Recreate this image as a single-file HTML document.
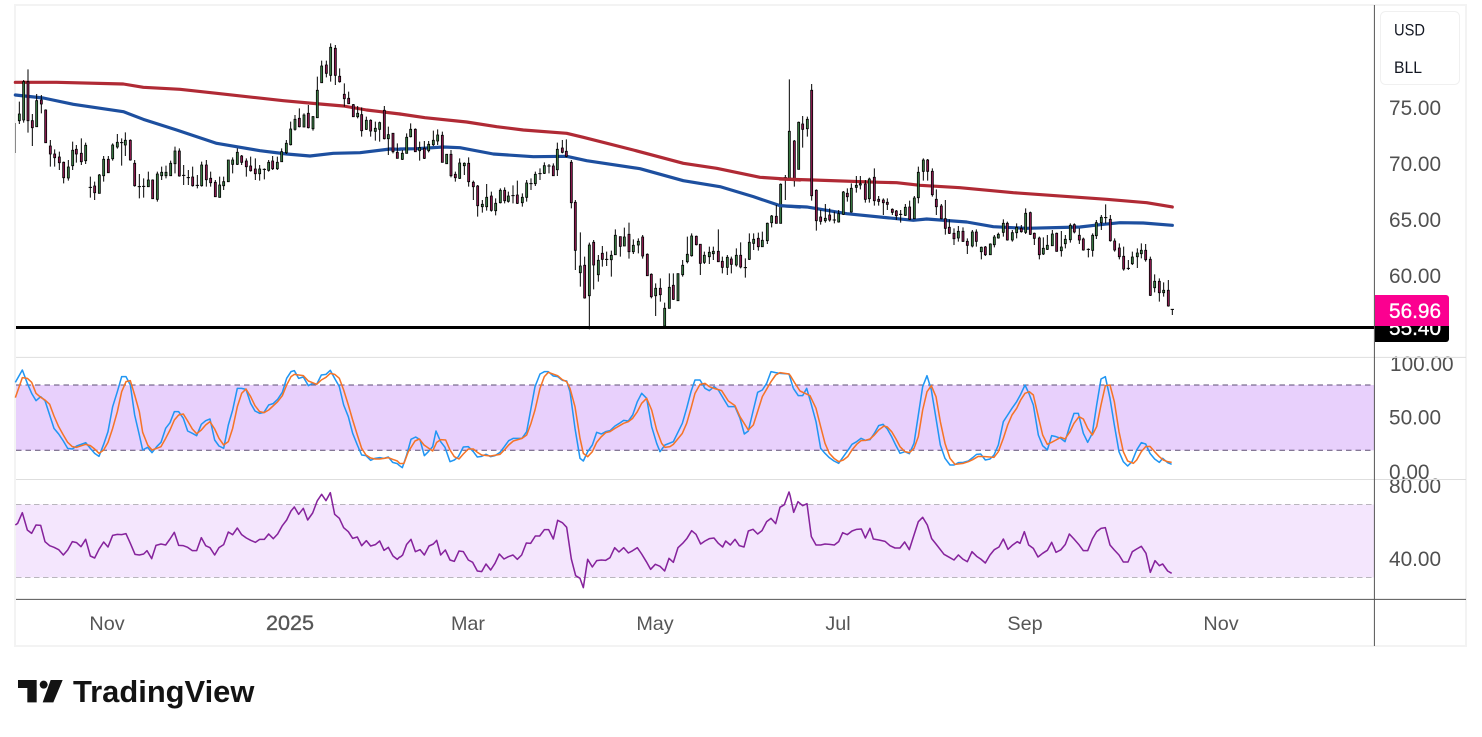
<!DOCTYPE html>
<html><head><meta charset="utf-8"><title>BLL chart</title>
<style>html,body{margin:0;padding:0;background:#fff;width:1482px;height:737px;overflow:hidden}svg{display:block;filter:blur(.3px)}
text{font-family:"Liberation Sans",sans-serif}
.ax{font-size:20.8px;fill:#505050}
.mo{font-size:19.8px;fill:#565656;text-anchor:middle}
.w{fill:none;stroke:#000;stroke-width:3}
.g{fill:#3a7d44;stroke:#000;stroke-width:2.4}
.r{fill:#8e1a50;stroke:#000;stroke-width:2.4}
.ma1{fill:none;stroke:#b02a35;stroke-width:9.5;stroke-linejoin:round;stroke-linecap:round}
.ma2{fill:none;stroke:#1d4f9f;stroke-width:9.5;stroke-linejoin:round;stroke-linecap:round}
.b{fill:none;stroke:#2196f3;stroke-width:4.6;stroke-linejoin:round}
.o{fill:none;stroke:#f57427;stroke-width:4.6;stroke-linejoin:round}
.p{fill:none;stroke:#86239c;stroke-width:4.6;stroke-linejoin:round}
</style></head><body>
<svg width="1482" height="737" viewBox="0 0 1482 737" xmlns="http://www.w3.org/2000/svg">
<rect width="1482" height="737" fill="#fff"/>
<rect x="15" y="5" width="1451" height="641" fill="#fff" stroke="#f3f3f3" stroke-width="2"/>

<!-- bands -->
<rect x="16" y="385" width="1358" height="65.3" fill="#e8d0fc"/>
<rect x="16" y="504.5" width="1358" height="73" fill="#f4e6fd"/>
<path d="M16 385H1374M16 450.3H1374" stroke="#5d4c74" stroke-width="1" stroke-dasharray="5.5 4" fill="none"/>
<path d="M16 504.5H1374M16 577.5H1374" stroke="#b9b6bd" stroke-width="1" stroke-dasharray="5.5 3.5" fill="none"/>

<!-- stray clipped wick -->
<path d="M15.5 123V153" stroke="#8a8a8a" stroke-width="1"/>

<!-- candles + MAs: section 1 -->
<g transform="translate(0,30) scale(.33333)">
<path class="ma1" d="M46 157 170 157 370 162 430 172 540 178 650 190 850 212 960 222 1030 228 1100 240 1200 252"/>
<path class="ma2" d="M46 195 130 204 220 223 370 245 430 268 530 300 650 340 780 362 860 372 930 378 1000 370 1080 368 1170 357 1200 358"/>
<path class="w" d="M58 215V282M71 150V278M84 118V308M97 252V348M110 192V290M124 195V250M137 238V338M151 330V410M164 358V410M178 365V420M191 395V460M205 390V452M218 335V420M229 345V398M244 325V405M257 338V402M271 440V503M266 472h10M284 455V510M298 432V490M311 378V455M325 378V428M338 340V392M352 312V356M365 325V407M360 338h10M376 307V378M391 328V392M404 390V470M418 432V505M413 470h10M431 445V503M426 469h10M445 425V470M458 448V506M472 425V515M485 410V450M498 407V445M512 392V437M525 350V430M538 355V440M551 405V465M546 436h10M565 420V465M560 443h10M578 410V470M592 435V475M587 466h10M605 395V470M619 390V470M632 425V470M646 450V500M659 440V503M671 440V480M685 390V455M698 382V430M712 355V405M725 375V405M739 385V440M752 380V425M766 385V450M779 405V452M793 415V448M788 418h10M806 390V425M818 378V420M832 380V420M845 355V395M859 330V372M872 275V346M885 255V302M898 235V292M912 250V292M925 225V295M939 258V302M952 140V263M965 92V158M979 92V142M992 40V155M1006 45V165M1019 115V158M1033 160V230M1046 185V221M1060 222V260M1073 228V265M1085 232V320M1099 260V300M1112 268V320M1126 275V332M1139 275V335M1153 228V328M1165 290V375M1179 310V370M1192 340V385"/>
<path class="g" d="M55 252h6v20h-6zM68 155h6v115h-6zM107 212h6v78h-6zM202 411h6v33h-6zM215 361h6v46h-6zM254 346h6v46h-6zM295 435h6v55h-6zM308 388h6v49h-6zM335 345h6v41h-6zM349 337h6v14h-6zM373 331h6v14h-6zM442 450h6v20h-6zM469 432h6v76h-6zM482 427h6v10h-6zM495 427h6v10h-6zM509 400h6v37h-6zM522 363h6v38h-6zM602 405h6v62h-6zM656 465h6v37h-6zM668 455h6v12h-6zM682 390h6v65h-6zM695 390h6v13h-6zM709 367h6v36h-6zM776 417h6v14h-6zM803 397h6v24h-6zM829 397h6v19h-6zM842 365h6v30h-6zM856 340h6v28h-6zM869 297h6v47h-6zM882 268h6v30h-6zM909 255h6v36h-6zM936 260h6v36h-6zM949 181h6v82h-6zM962 108h6v50h-6zM989 52h6v84h-6zM1070 250h6v10h-6zM1096 271h6v27h-6zM1123 295h6v9h-6zM1136 278h6v20h-6zM1162 314h6v12h-6z"/>
<path class="r" d="M81 155h6v117h-6zM94 272h6v21h-6zM121 210h6v12h-6zM134 240h6v98h-6zM148 348h6v24h-6zM161 372h6v11h-6zM175 381h6v17h-6zM188 397h6v46h-6zM226 358h6v14h-6zM241 370h6v25h-6zM281 468h6v20h-6zM322 388h6v40h-6zM388 331h6v59h-6zM401 400h6v67h-6zM455 450h6v56h-6zM535 363h6v75h-6zM575 441h6v26h-6zM616 405h6v44h-6zM629 445h6v13h-6zM643 457h6v43h-6zM722 378h6v19h-6zM736 393h6v17h-6zM749 408h6v14h-6zM763 417h6v14h-6zM815 393h6v23h-6zM895 265h6v25h-6zM922 250h6v43h-6zM976 105h6v25h-6zM1003 55h6v81h-6zM1016 139h6v16h-6zM1030 193h6v13h-6zM1043 205h6v16h-6zM1057 224h6v36h-6zM1082 254h6v48h-6zM1109 271h6v32h-6zM1150 241h6v85h-6zM1176 310h6v55h-6zM1189 367h6v18h-6z"/>
</g>

<!-- section 2 -->
<g transform="translate(400,60) scale(.33333)">
<path class="ma1" d="M0 162 75 173 200 186 290 200 370 210 500 220 550 232 700 270 850 310 950 325 1080 352 1200 360"/>
<path class="ma2" d="M0 267 50 266 130 261 180 263 280 282 400 290 500 289 560 302 720 326 850 362 960 380 1060 410 1140 437 1200 441"/>
<path class="w" d="M7 270V300M20 220V280M32 190V232M46 205V275M59 245V302M73 243V297M86 243V277M100 212V258M113 208V255M127 215V307M140 283V311M153 270V352M166 335V365M179 295V357M193 307V345M206 292V380M220 362V420M233 375V470M247 420V458M260 372V452M274 395V455M287 415V466M301 385V430M314 382V430M325 395V428M339 376V430M334 407h10M352 362V432M367 400V440M380 360V425M393 355V390M388 371h10M406 335V378M420 325V360M415 341h10M433 307V342M447 312V340M442 318h10M460 310V348M472 248V348M487 240V280M499 238V292M514 300V445M526 420V630M541 517V680M554 590V716M568 548V808M581 540V688M595 585V665M607 558V620M620 575V618M615 598h10M634 572V650M646 508V585M661 530V590M673 503V558M687 488V596M700 538V582M715 535V580M728 525V596M742 580V647M754 640V715M767 670V768M781 655V725M794 728V798M808 640V745M820 640V720M834 640V722M848 600V650M862 530V610M875 520V590M889 527V556M901 553V645M913 575V612M928 560V612M940 560V600M955 508V605M967 590V640M982 585V645M994 590V640M1009 565V620M1022 547V625M1036 595V653M1031 623h10M1048 520V600M1061 520V570M1075 518V572M1087 515V560M1102 488V552M1115 465V502M1129 435V490M1142 370V490M1156 345V420M1151 353h10M1168 58V358M1183 240V380M1196 185V328"/>
<path class="g" d="M4 280h6v18h-6zM17 232h6v48h-6zM29 208h6v22h-6zM56 263h6v9h-6zM83 253h6v19h-6zM97 241h6v13h-6zM110 225h6v18h-6zM137 283h6v28h-6zM176 309h6v46h-6zM190 310h6v7h-6zM244 433h6v7h-6zM257 412h6v28h-6zM284 430h6v22h-6zM298 391h6v37h-6zM322 408h6v16h-6zM364 412h6v16h-6zM377 369h6v43h-6zM403 343h6v28h-6zM430 317h6v23h-6zM469 268h6v61h-6zM538 618h6v20h-6zM565 555h6v152h-6zM592 601h6v43h-6zM631 586h6v13h-6zM643 526h6v58h-6zM670 531h6v27h-6zM697 556h6v19h-6zM712 544h6v11h-6zM764 685h6v22h-6zM791 745h6v53h-6zM805 682h6v63h-6zM831 641h6v81h-6zM845 616h6v28h-6zM859 583h6v22h-6zM872 528h6v59h-6zM910 586h6v21h-6zM925 577h6v13h-6zM937 574h6v7h-6zM979 592h6v30h-6zM1006 586h6v29h-6zM1045 547h6v51h-6zM1058 538h6v12h-6zM1084 541h6v19h-6zM1099 490h6v52h-6zM1112 468h6v20h-6zM1139 373h6v117h-6zM1165 214h6v144h-6zM1193 187h6v141h-6z"/>
<path class="r" d="M43 208h6v67h-6zM70 265h6v30h-6zM124 226h6v81h-6zM150 283h6v64h-6zM163 343h6v10h-6zM203 310h6v55h-6zM217 367h6v13h-6zM230 378h6v59h-6zM271 408h6v43h-6zM311 391h6v31h-6zM349 405h6v25h-6zM457 318h6v29h-6zM484 264h6v13h-6zM496 274h6v15h-6zM511 307h6v121h-6zM523 427h6v144h-6zM551 616h6v98h-6zM578 547h6v68h-6zM604 580h6v18h-6zM658 530h6v29h-6zM684 523h6v52h-6zM725 531h6v57h-6zM739 583h6v64h-6zM751 643h6v67h-6zM778 685h6v19h-6zM817 676h6v42h-6zM886 529h6v25h-6zM898 553h6v57h-6zM952 574h6v31h-6zM964 604h6v18h-6zM991 597h6v16h-6zM1019 586h6v35h-6zM1072 535h6v25h-6zM1126 469h6v21h-6zM1180 243h6v117h-6z"/>
</g>

<!-- section 3 -->
<g transform="translate(780,60) scale(.33333)">
<path class="ma1" d="M0 357 100 360 300 367 350 368 420 376 540 383 700 398 980 418 1100 428 1177 441"/>
<path class="ma2" d="M0 437 80 441 200 461 400 481 440 477 560 486 640 500 740 505 900 501 960 494 1020 488 1090 489 1177 496"/>
<path class="w" d="M68 168V263M82 170V230M95 72V422M109 388V512M122 450V494M136 432V488M149 445V485M163 455V490M158 480h10M176 450V488M190 393V465M202 385V425M214 370V458M229 348V398M241 348V388M256 360V428M268 353V428M283 325V437M296 408V437M310 415V465M322 415V450M337 445V465M349 450V480M362 450V488M357 463h10M376 432V468M389 422V480M403 408V476M415 320V430M430 295V362M443 297V362M457 325V410M469 388V465M484 432V478M496 420V524M508 478V522M522 505V555M535 498V545M549 502V546M562 535V582M577 510V562M589 508V560M604 560V598M616 558V588M631 550V585M643 525V562M655 518V536M670 478V530M682 485V542M697 510V545M710 490V535M724 495V518M737 445V522M751 455V525M763 518V555M778 530V598M790 532V585M802 525V570M817 510V558M830 518V575M844 513V590M856 525V565M871 490V548M883 490V520M898 505V552M910 533V572M925 565V592M920 568h10M938 520V590M949 480V537M964 465V510M977 433V490M972 473h10M991 465V545M1004 535V575M1018 550V598M1031 560V632M1045 600V630M1040 625h10M1057 575V615M1072 565V624M1084 550V595M1097 552V605M1111 590V708M1124 643V697M1138 655V725M1151 667V710M1165 660V740M1172 748h10M1177 748V765"/>
<path class="g" d="M79 178h6v28h-6zM133 475h6v7h-6zM173 461h6v25h-6zM187 396h6v67h-6zM211 385h6v71h-6zM226 376h6v6h-6zM238 371h6v4h-6zM265 357h6v59h-6zM373 442h6v24h-6zM400 414h6v62h-6zM412 337h6v76h-6zM427 300h6v34h-6zM532 514h6v20h-6zM574 516h6v42h-6zM601 562h6v13h-6zM628 552h6v32h-6zM640 531h6v23h-6zM652 523h6v11h-6zM667 490h6v27h-6zM694 518h6v22h-6zM707 502h6v16h-6zM734 460h6v57h-6zM787 565h6v17h-6zM799 556h6v12h-6zM814 522h6v35h-6zM841 561h6v11h-6zM853 538h6v13h-6zM868 496h6v43h-6zM935 526h6v45h-6zM946 488h6v39h-6zM961 472h6v16h-6zM1054 591h6v20h-6zM1069 579h6v11h-6zM1081 571h6v10h-6zM1121 664h6v19h-6zM1148 691h6v7h-6z"/>
<path class="r" d="M65 192h6v16h-6zM92 91h6v316h-6zM106 391h6v91h-6zM119 471h6v13h-6zM146 465h6v15h-6zM199 400h6v10h-6zM253 372h6v46h-6zM280 352h6v70h-6zM293 418h6v6h-6zM307 420h6v8h-6zM319 427h6v6h-6zM334 448h6v9h-6zM346 453h6v14h-6zM386 441h6v37h-6zM440 300h6v34h-6zM454 334h6v70h-6zM466 418h6v22h-6zM481 438h6v38h-6zM493 476h6v29h-6zM505 502h6v18h-6zM519 520h6v16h-6zM546 514h6v30h-6zM559 544h6v12h-6zM586 516h6v28h-6zM613 561h6v23h-6zM679 490h6v50h-6zM721 505h6v10h-6zM748 458h6v65h-6zM760 520h6v15h-6zM775 534h6v50h-6zM827 520h6v54h-6zM880 494h6v22h-6zM895 526h6v14h-6zM907 537h6v33h-6zM988 478h6v64h-6zM1001 543h6v27h-6zM1015 564h6v26h-6zM1028 589h6v38h-6zM1094 571h6v28h-6zM1108 598h6v108h-6zM1135 664h6v34h-6zM1162 691h6v47h-6z"/>
</g>

<!-- support line -->
<rect x="16" y="326" width="1360" height="3" fill="#000"/>

<!-- Stoch + RSI -->
<g transform="translate(0,355) scale(.33333)">
<polyline class="b" points="46,82 67,45 82,85 95,115 108,137 122,125 135,137 149,180 162,220 176,237 190,258 203,280 217,282 230,273 257,263 271,280 284,295 297,304 311,268 324,230 338,155 352,110 365,65 378,65 391,90 404,180 418,240 428,285 443,277 456,293 470,275 483,262 497,220 510,203 523,170 536,170 550,190 563,228 577,235 590,242 604,208 617,197 630,192 644,255 657,273 671,280 685,210 698,165 712,100 725,100 738,103 752,145 765,168 779,175 792,172 806,150 819,146 833,133 847,112 860,70 873,50 883,47 896,70 910,66 925,92 938,85 950,88 964,60 978,58 991,46 1004,70 1018,95 1031,150 1045,185 1058,235 1072,270 1085,300 1098,302 1112,316 1125,310 1139,308 1152,310 1165,306 1178,322 1192,326 1200,333"/>
<polyline class="o" points="46,128 67,68 82,70 95,82 108,115 122,127 135,135 149,148 162,183 176,215 190,240 203,262 217,275 230,277 257,268 271,272 284,282 297,295 311,285 324,262 338,220 352,170 365,110 378,80 391,77 404,120 418,170 428,232 443,270 456,285 470,280 483,275 497,250 510,225 523,195 536,180 550,177 563,198 577,222 590,236 604,225 617,210 630,200 644,222 657,250 671,270 685,260 698,220 712,155 725,115 738,102 752,125 765,152 779,170 792,173 806,165 819,153 833,140 847,122 860,90 873,65 883,58 896,60 910,62 925,78 938,83 950,88 964,75 978,67 991,55 1004,58 1018,70 1031,105 1045,150 1058,195 1072,240 1085,280 1098,300 1112,309 1125,312 1139,312 1152,310 1165,308 1178,313 1192,318 1200,326"/>
<polyline class="p" points="46,510 53,505 67,473 82,525 95,535 108,510 122,511 135,560 149,572 162,577 176,584 190,600 203,585 217,560 230,563 243,575 257,553 271,603 284,609 297,583 311,561 324,576 338,541 352,538 365,539 378,536 391,565 405,598 418,600 431,597 441,587 455,611 468,571 483,567 497,570 510,552 523,532 536,571 550,572 563,577 577,587 590,587 604,548 617,572 630,578 644,600 657,578 671,569 685,531 698,539 712,519 725,539 739,549 752,556 766,562 779,553 793,553 806,537 820,551 833,537 847,512 860,495 873,468 883,456 896,478 910,460 923,495 938,474 952,437 965,418 978,437 991,413 1004,478 1018,490 1031,518 1045,530 1058,550 1072,546 1085,572 1099,557 1112,573 1126,569 1139,558 1152,586 1165,577 1179,603 1192,613 1200,605"/>
</g>
<g transform="translate(400,355) scale(.33333)">
<polyline class="b" points="0,333 7,338 20,300 33,253 47,246 60,254 73,302 85,290 98,275 108,228 122,260 135,277 150,320 163,315 175,305 190,276 205,275 220,290 232,306 245,304 258,298 272,305 285,302 300,292 313,275 326,257 340,250 366,250 380,230 393,160 405,95 420,57 433,50 445,50 460,63 473,65 487,76 500,78 510,110 525,220 540,310 550,318 563,290 577,270 590,232 604,237 617,230 630,227 645,213 658,205 671,196 685,198 698,180 712,140 725,115 740,130 755,215 770,265 780,290 795,270 820,260 847,205 860,160 873,110 885,75 900,75 915,100 928,107 942,95 955,105 970,130 985,155 1005,155 1020,190 1033,237 1045,228 1060,165 1073,112 1087,105 1100,85 1113,50 1127,53 1140,55 1167,57 1180,100"/>
<polyline class="o" points="0,326 12,325 25,290 45,258 58,252 72,270 98,288 110,262 122,254 137,255 150,285 163,305 177,312 190,297 205,282 220,282 232,292 245,300 272,303 300,298 313,285 326,270 340,258 366,250 380,240 393,205 405,165 420,100 433,65 445,52 473,62 487,74 500,80 510,100 525,155 540,250 550,295 563,305 577,290 590,262 604,245 617,233 630,230 645,220 671,205 685,200 698,190 712,170 725,145 740,130 755,165 770,225 785,265 795,277 810,275 820,268 847,235 860,205 873,160 885,115 900,88 915,85 928,95 942,100 965,107 985,138 1005,152 1020,185 1045,225 1060,210 1087,125 1113,80 1127,60 1140,53 1167,57 1170,60"/>
<polyline class="p" points="0,607 8,600 20,568 33,553 46,590 60,584 73,600 87,573 100,567 110,556 122,600 136,585 150,615 163,619 177,588 190,590 205,615 218,622 232,648 245,650 258,627 272,645 285,625 298,597 312,612 325,605 339,600 352,613 365,600 379,564 392,565 406,543 419,543 433,524 446,524 460,552 473,496 487,503 500,517 514,612 527,662 540,670 550,698 563,613 577,636 590,617 604,615 617,616 630,608 644,578 657,591 671,578 685,594 698,587 712,578 725,597 739,620 752,643 766,628 780,634 794,648 807,610 820,622 834,578 848,565 861,550 875,527 888,538 902,567 915,558 928,551 942,549 955,565 968,576 977,558 991,570 1005,553 1018,572 1032,576 1045,528 1059,523 1073,537 1086,527 1100,500 1113,490 1127,506 1140,457 1153,449 1167,411 1170,420"/>
</g>
<g transform="translate(790,355) scale(.33333)">
<polyline class="b" points="10,100 25,122 38,122 50,100 63,145 78,200 92,280 105,295 118,308 132,318 146,325 160,305 173,287 186,268 200,260 213,250 226,256 240,254 253,235 266,212 279,208 292,222 305,245 318,272 330,295 345,290 358,296 372,265 385,180 398,95 411,62 424,105 438,190 451,270 465,310 480,330 492,330 505,323 520,322 535,318 548,308 560,298 572,297 586,315 600,312 612,300 625,270 640,200 653,180 666,160 680,140 692,118 705,90 718,118 730,150 745,240 758,272 772,285 785,242 798,245 812,250 825,260 840,210 852,175 865,175 880,235 893,262 907,235 920,150 933,72 946,65 960,130 973,210 987,290 1000,320 1013,333 1026,320 1040,285 1054,263 1067,267 1080,295 1094,312 1108,322 1118,310 1133,323 1145,328"/>
<polyline class="o" points="0,60 15,85 30,108 45,115 60,122 78,160 92,215 105,265 118,295 132,310 146,320 160,315 173,305 186,285 200,268 213,257 226,256 240,252 253,240 266,225 282,213 292,216 305,230 318,252 330,275 345,290 358,293 372,280 385,245 398,165 411,110 424,92 438,125 451,200 465,265 480,310 495,328 520,325 535,320 548,314 565,304 586,305 612,307 625,290 640,250 653,210 666,180 680,160 692,135 705,115 718,110 730,120 745,185 758,240 772,268 785,262 798,255 812,247 825,252 840,230 852,205 867,185 880,192 893,220 907,240 920,215 933,150 946,92 960,90 973,140 987,230 1000,290 1013,318 1030,325 1040,315 1054,290 1067,275 1080,274 1094,290 1108,305 1120,315 1133,320 1145,322"/>
<polyline class="p" points="0,420 11,472 24,440 38,452 51,446 64,545 78,570 92,570 105,567 119,568 133,570 146,560 158,533 172,539 186,528 200,523 214,522 226,549 240,520 250,552 267,555 285,559 300,572 315,579 330,579 344,561 358,584 372,540 385,500 398,487 412,510 425,551 438,567 462,598 478,607 492,615 505,600 518,612 532,620 546,590 560,604 572,612 586,624 600,600 613,584 627,576 640,552 654,583 668,570 682,560 690,565 703,530 716,570 730,580 744,606 758,595 772,586 785,562 798,592 812,585 826,568 838,537 852,552 866,568 880,587 893,587 907,552 920,530 933,520 946,518 960,570 973,585 987,600 1000,621 1014,621 1027,590 1040,582 1054,574 1068,595 1081,652 1095,617 1108,632 1118,627 1133,648 1145,655"/>
</g>

<!-- axis labels -->
<text class="ax" x="1389" y="115">75.00</text>
<text class="ax" x="1389" y="171">70.00</text>
<text class="ax" x="1389" y="227">65.00</text>
<text class="ax" x="1389" y="283">60.00</text>
<text class="ax" x="1390" y="371">100.00</text>
<text class="ax" x="1389" y="424.5">50.00</text>
<text class="ax" x="1389" y="479">0.00</text>
<text class="ax" x="1389" y="493">80.00</text>
<text class="ax" x="1389" y="566">40.00</text>

<!-- panel separators -->
<path d="M16 357.4H1466M16 479.5H1466" stroke="#dedede" stroke-width="1" fill="none"/>
<path d="M16 599.4H1466" stroke="#555" stroke-width="1" fill="none"/>
<path d="M1374.4 5V646" stroke="#555" stroke-width="1" fill="none"/>

<!-- price tags -->
<path d="M1375 320H1449V339a3 3 0 0 1-3 3H1375Z" fill="#000"/>
<text x="1389" y="335" fill="#fff" style="font-size:20.8px;stroke:#fff;stroke-width:.35px">55.40</text>
<path d="M1375 295H1446a3 3 0 0 1 3 3V326H1375Z" fill="#fb0090"/>
<text x="1389" y="318" fill="#fff" style="font-size:20.8px;stroke:#fff;stroke-width:.35px">56.96</text>

<!-- USD / BLL box -->
<rect x="1380.5" y="11.5" width="79" height="73" rx="5" fill="#fff" stroke="#f0f0f0"/>
<text x="1394" y="35.5" fill="#131722" textLength="31" lengthAdjust="spacingAndGlyphs" style="font-size:16.5px">USD</text>
<text x="1394" y="73" fill="#131722" textLength="28" lengthAdjust="spacingAndGlyphs" style="font-size:16.5px">BLL</text>

<!-- months -->
<text class="mo" x="107" y="630">Nov</text>
<text class="mo" x="290" y="630" textLength="48" lengthAdjust="spacingAndGlyphs" style="font-size:21px;stroke:#565656;stroke-width:.35px">2025</text>
<text class="mo" x="468" y="630">Mar</text>
<text class="mo" x="655" y="630">May</text>
<text class="mo" x="838" y="630">Jul</text>
<text class="mo" x="1025" y="630">Sep</text>
<text class="mo" x="1221" y="630">Nov</text>

<!-- logo -->
<g transform="translate(0,600) scale(.33333)" fill="#131313">
<path d="M54 240H110V307H82V264H54Z"/>
<circle cx="131" cy="254" r="12"/>
<path d="M152 240H188L160 307H128Z"/>
</g>
<text x="73" y="702" fill="#131313" font-weight="bold" style="font-size:30.9px;font-weight:bold">TradingView</text>
</svg>
</body></html>
